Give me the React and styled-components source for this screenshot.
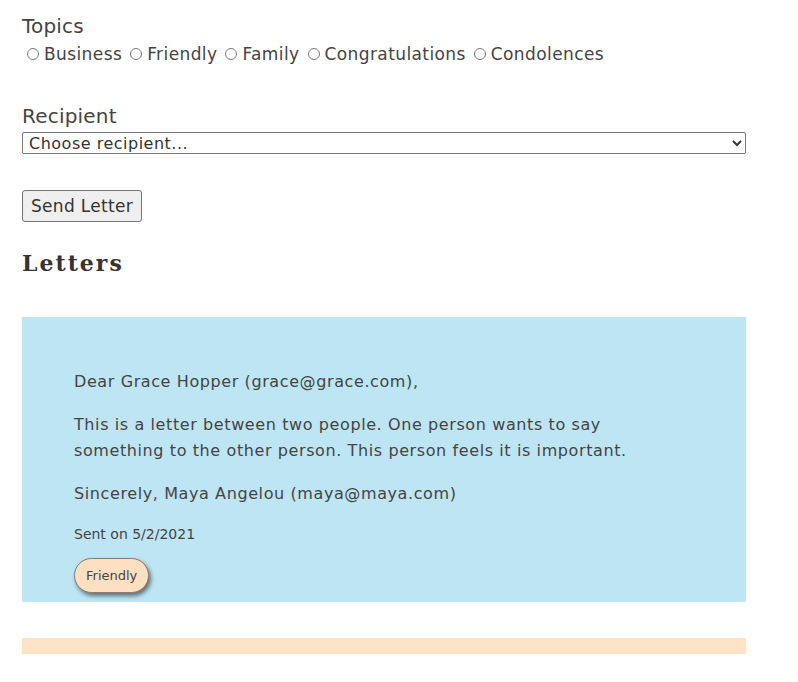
import React from 'react'
import styled, { createGlobalStyle } from 'styled-components'

const GlobalStyle = createGlobalStyle`
  body {
    margin: 8px;
    background: #fff;
    color: #444;
    font-family: "DejaVu Sans", "Noto Sans", sans-serif;
  }
`

const topics = ['Business', 'Friendly', 'Family', 'Congratulations', 'Condolences']

const letters = [
  {
    to: 'Grace Hopper (grace@grace.com)',
    body: 'This is a letter between two people. One person wants to say something to the other person. This person feels it is important.',
    from: 'Maya Angelou (maya@maya.com)',
    sent: '5/2/2021',
    topic: 'Friendly',
    color: '#bee5f3',
  },
]

function App() {
  return (
    <Page>
      <GlobalStyle />
      <Form>
        <Field>
          <Label>Topics</Label>
          <RadioRow>
            {topics.map((t) => (
              <RadioLabel key={t}>
                <Radio type="radio" name="topic" value={t} />
                {t}
              </RadioLabel>
            ))}
          </RadioRow>
        </Field>
        <Field>
          <Label>Recipient</Label>
          <Select defaultValue="">
            <option value="">Choose recipient...</option>
          </Select>
        </Field>
        <Button>Send Letter</Button>
      </Form>
      <Heading>Letters</Heading>
      <LetterList>
        {letters.map((l) => (
          <Card key={l.to} color={l.color}>
            <Line>Dear {l.to},</Line>
            <Line>{l.body}</Line>
            <Line>Sincerely, {l.from}</Line>
            <Sent>Sent on {l.sent}</Sent>
            <Badge>{l.topic}</Badge>
          </Card>
        ))}
        <NextCard />
      </LetterList>
    </Page>
  )
}

export default App

const Page = styled.div`
  width: 724px;
  padding-left: 14px;
`
const Form = styled.div`
  display: flex;
  flex-direction: column;
  align-items: flex-start;
  padding-top: 6px;
`
const Field = styled.div`
  display: flex;
  flex-direction: column;
  width: 100%;
  margin-bottom: 37px;
`
const Label = styled.label`
  font-size: 20px;
  line-height: 24px;
  letter-spacing: 0.2px;
`
const RadioRow = styled.div`
  display: flex;
  gap: 8px;
  margin-top: 3px;
  padding-left: 5px;
`
const RadioLabel = styled.label`
  display: flex;
  align-items: center;
  gap: 5px;
  font-size: 17px;
  line-height: 26px;
  letter-spacing: 0.4px;
`
const Radio = styled.input`
  width: 12px;
  height: 12px;
  margin: 0;
`
const Select = styled.select`
  width: 100%;
  height: 22px;
  margin-top: 4px;
  font-family: inherit;
  font-size: 16px;
  letter-spacing: 0.5px;
  color: #333;
  border: 1px solid #777;
  border-radius: 2px;
  background: #fff;
  padding: 0 2px;
`
const Button = styled.button`
  margin-top: -1px;
  font-family: inherit;
  font-size: 17px;
  letter-spacing: 0.3px;
  color: #333;
  padding: 2px 8px;
  height: 32px;
  background: #efefef;
  border: 1px solid #767676;
  border-radius: 3px;
`
const Heading = styled.h2`
  font-family: "DejaVu Serif", serif;
  font-weight: bold;
  font-size: 22px;
  letter-spacing: 2px;
  margin: 28px 0 41px;
  color: #333;
`
const LetterList = styled.div`
  display: flex;
  flex-direction: column;
  gap: 36px;
`
const Card = styled.div`
  background: ${(p) => p.color};
  padding: 52px 92px 9px 52px;
  height: 224px;
`
const Line = styled.p`
  font-size: 16px;
  letter-spacing: 0.6px;
  line-height: 26px;
  margin: 0 0 17px;
  color: #444;
`
const Sent = styled.p`
  font-size: 14px;
  line-height: 20px;
  margin: 1px 0 14px;
`
const Badge = styled.span`
  display: inline-block;
  font-size: 13px;
  line-height: 17px;
  padding: 8px 11px;
  background: #fde0c2;
  border: 1px solid #8a7a6a;
  border-radius: 18px;
  box-shadow: 2px 3px 4px rgba(0, 0, 0, 0.5);
`
const NextCard = styled.div`
  background: #fce3c4;
  height: 16px;
`
